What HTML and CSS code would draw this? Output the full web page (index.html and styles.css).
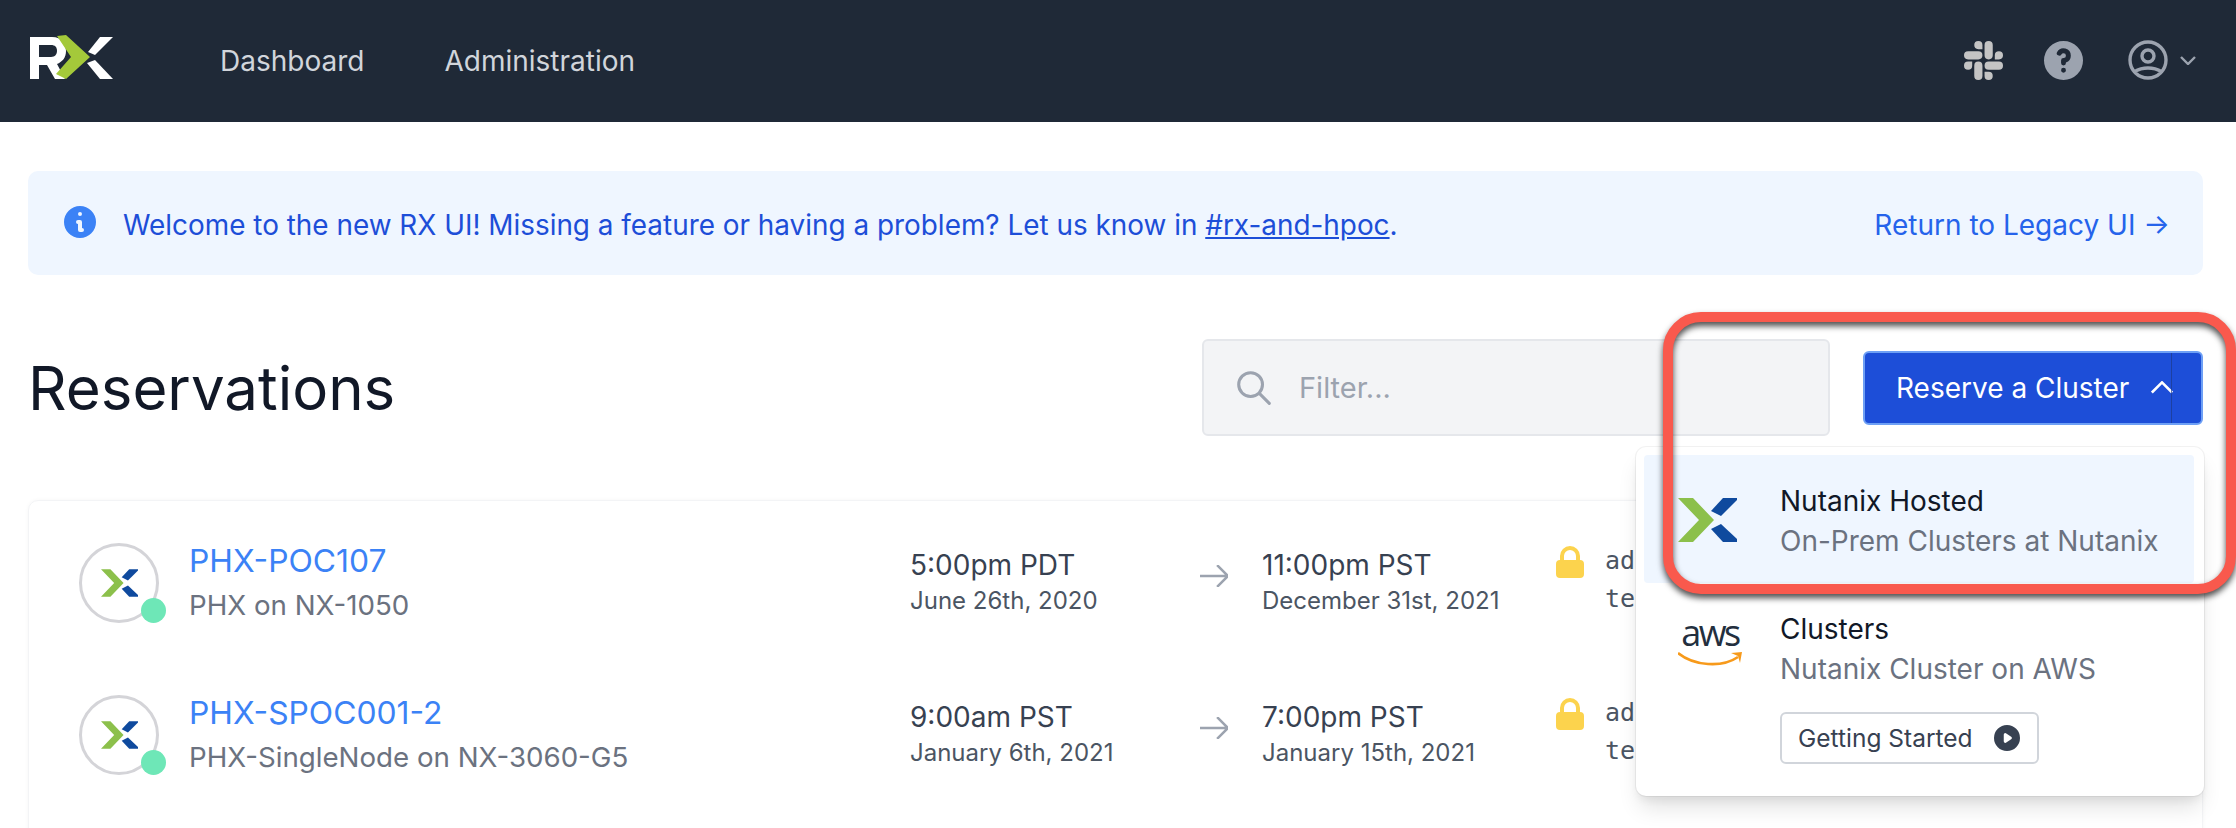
FILE: index.html
```html
<!DOCTYPE html>
<html lang="en">
<head>
<meta charset="utf-8">
<title>Reservations</title>
<link rel="stylesheet" href="styles.css">
</head>
<body>
<svg class="sprite" aria-hidden="true">
  <symbol id="nx" viewBox="0 0 59 44">
    <polygon fill="#8cc04b" points="0,0 15,0 36,22 15,44 0,44 21,22"/>
    <polygon fill="#0f4a9e" points="33,13 45,0 59,0 59,2 43,18"/>
    <polygon fill="#0f4a9e" points="33,31 43,26 59,41 59,44 45,44"/>
  </symbol>
  <symbol id="lock" viewBox="3 2 14 16">
    <path fill="#fcd34d" fill-rule="evenodd" d="M5 9V7a5 5 0 0110 0v2a2 2 0 012 2v5a2 2 0 01-2 2H5a2 2 0 01-2-2v-5a2 2 0 012-2zm8-2v2H7V7a3 3 0 016 0z"/>
  </symbol>
  <symbol id="arrow" viewBox="3 5 18 14">
    <path fill="none" stroke="#9ca3af" stroke-width="1.6" d="M14 5l7 7m0 0l-7 7m7-7H3"/>
  </symbol>
</svg>

<header class="topbar">
  <svg class="logo" viewBox="0 0 83 45" aria-label="RX">
    <path fill="#fff" fill-rule="evenodd" d="M0 2H22C32 2 36 9 36 16C36 23 32 27 27 29L35 44H25L17 30H9V44H0ZM9 10V22H21C25 22 27 19 27 16C27 12 25 10 21 10Z"/>
    <polygon fill="#a4c93a" points="27,1 36,0 60,22 36,44 26,39 41,22"/>
    <polygon fill="#fff" points="58,17 70,2 83,2 65,20"/>
    <polygon fill="#fff" points="57,28 65,25 83,44 70,44"/>
  </svg>
  <nav class="nav">
    <a class="nav-link">Dashboard</a>
    <a class="nav-link">Administration</a>
  </nav>
  <div class="top-icons">
    <svg class="icon-slack" viewBox="0 0 24 24"><path fill="#c4c4c4" d="M5.042 15.165a2.528 2.528 0 0 1-2.52 2.523A2.528 2.528 0 0 1 0 15.165a2.527 2.527 0 0 1 2.522-2.52h2.52v2.52zM6.313 15.165a2.527 2.527 0 0 1 2.521-2.52 2.527 2.527 0 0 1 2.521 2.52v6.313A2.528 2.528 0 0 1 8.834 24a2.528 2.528 0 0 1-2.521-2.522v-6.313zM8.834 5.042a2.528 2.528 0 0 1-2.521-2.52A2.528 2.528 0 0 1 8.834 0a2.528 2.528 0 0 1 2.521 2.522v2.52H8.834zM8.834 6.313a2.528 2.528 0 0 1 2.521 2.521 2.528 2.528 0 0 1-2.521 2.521H2.522A2.528 2.528 0 0 1 0 8.834a2.528 2.528 0 0 1 2.522-2.521h6.312zM18.956 8.834a2.528 2.528 0 0 1 2.522-2.521A2.528 2.528 0 0 1 24 8.834a2.528 2.528 0 0 1-2.522 2.521h-2.522V8.834zM17.688 8.834a2.528 2.528 0 0 1-2.523 2.521 2.527 2.527 0 0 1-2.52-2.521V2.522A2.527 2.527 0 0 1 15.165 0a2.528 2.528 0 0 1 2.523 2.522v6.312zM15.165 18.956a2.528 2.528 0 0 1 2.523 2.522A2.528 2.528 0 0 1 15.165 24a2.527 2.527 0 0 1-2.52-2.522v-2.522h2.52zM15.165 17.688a2.527 2.527 0 0 1-2.52-2.523 2.526 2.526 0 0 1 2.52-2.52h6.313A2.527 2.527 0 0 1 24 15.165a2.528 2.528 0 0 1-2.522 2.523h-6.313z"/></svg>
    <svg class="icon-help" viewBox="2 2 16 16"><path fill="#9ca3af" fill-rule="evenodd" d="M18 10a8 8 0 11-16 0 8 8 0 0116 0zm-8-3a1 1 0 00-.867.5 1 1 0 11-1.731-1A3 3 0 0113 8a3.001 3.001 0 01-2 2.83V11a1 1 0 11-2 0v-1a1 1 0 011-1 1 1 0 100-2zm0 8a1 1 0 100-2 1 1 0 000 2z"/></svg>
    <div class="user-menu">
      <svg class="icon-user" viewBox="2 2 20 20"><path fill="none" stroke="#9ca3af" stroke-width="1.7" stroke-linecap="round" stroke-linejoin="round" d="M5.121 17.804A13.937 13.937 0 0112 16c2.5 0 4.847.655 6.879 1.804M15 10a3 3 0 11-6 0 3 3 0 016 0zm6 2a9 9 0 11-18 0 9 9 0 0118 0z"/></svg>
      <svg class="icon-chev" viewBox="4 8 16 9"><path fill="none" stroke="#9ca3af" stroke-width="2.4" d="M19 9l-7 7-7-7"/></svg>
    </div>
  </div>
</header>

<main class="page">
  <section class="banner">
    <svg class="icon-info" viewBox="2 2 16 16"><path fill="#3b82f6" fill-rule="evenodd" d="M18 10a8 8 0 11-16 0 8 8 0 0116 0zm-7-4a1 1 0 11-2 0 1 1 0 012 0zM9 9a1 1 0 000 2v3a1 1 0 001 1h1a1 1 0 100-2v-3a1 1 0 00-1-1H9z"/></svg>
    <p class="banner-text">Welcome to the new RX UI! Missing a feature or having a problem? Let us know in <a class="banner-link">#rx-and-hpoc</a>.</p>
    <a class="banner-return">Return to Legacy UI →</a>
  </section>

  <section class="title-row">
    <h1 class="title">Reservations</h1>
    <div class="filter">
      <svg class="icon-search" viewBox="2 2 20 20"><path fill="none" stroke="#9ca3af" stroke-width="1.8" stroke-linecap="round" d="M21 21l-6-6m2-5a7 7 0 11-14 0 7 7 0 0114 0z"/></svg>
      <span class="filter-text">Filter...</span>
    </div>
    <div class="reserve">
      <button class="reserve-btn">
        <span class="reserve-label">Reserve a Cluster</span>
        <svg class="icon-up" viewBox="4.5 7 15 9"><path fill="none" stroke="#fff" stroke-width="1.8" d="M5 15l7-7 7 7"/></svg>
        <span class="reserve-split"></span>
      </button>
      <div class="dropdown">
        <div class="drop-item drop-active">
          <svg class="drop-logo"><use href="#nx"/></svg>
          <div class="drop-body">
            <div class="drop-title">Nutanix Hosted</div>
            <div class="drop-sub">On-Prem Clusters at Nutanix</div>
          </div>
        </div>
        <div class="drop-item drop-aws">
          <div class="aws-logo">
            <span class="aws-word">aws</span>
            <svg class="aws-smile" viewBox="0 0 64 15"><path fill="none" stroke="#f79a1b" stroke-width="2.6" d="M0 1C16 14 44 16 60 5"/><path fill="#f79a1b" d="M53 1L64 0L62 11L60 4Z"/></svg>
          </div>
          <div class="drop-body">
            <div class="drop-title">Clusters</div>
            <div class="drop-sub">Nutanix Cluster on AWS</div>
            <button class="started">
              <span>Getting Started</span>
              <svg class="icon-play" viewBox="2 2 16 16"><path fill="#374151" fill-rule="evenodd" d="M10 18a8 8 0 100-16 8 8 0 000 16zM9.555 7.168A1 1 0 008 8v4a1 1 0 001.555.832l3-2a1 1 0 000-1.664l-3-2z"/></svg>
            </button>
          </div>
        </div>
      </div>
    </div>
  </section>

  <section class="card">
    <article class="row">
      <div class="avatar"><svg class="avatar-logo"><use href="#nx"/></svg><span class="status"></span></div>
      <div class="cell">
        <a class="res-name">PHX-POC107</a>
        <div class="res-sub">PHX on NX-1050</div>
      </div>
      <div class="cell">
        <div class="time">5:00pm PDT</div>
        <div class="date">June 26th, 2020</div>
      </div>
      <svg class="row-arrow"><use href="#arrow"/></svg>
      <div class="cell">
        <div class="time">11:00pm PST</div>
        <div class="date">December 31st, 2021</div>
      </div>
      <svg class="row-lock"><use href="#lock"/></svg>
      <div class="cred">
        <div>ad</div>
        <div>te</div>
      </div>
    </article>
    <article class="row">
      <div class="avatar"><svg class="avatar-logo"><use href="#nx"/></svg><span class="status"></span></div>
      <div class="cell">
        <a class="res-name">PHX-SPOC001-2</a>
        <div class="res-sub">PHX-SingleNode on NX-3060-G5</div>
      </div>
      <div class="cell">
        <div class="time">9:00am PST</div>
        <div class="date">January 6th, 2021</div>
      </div>
      <svg class="row-arrow"><use href="#arrow"/></svg>
      <div class="cell">
        <div class="time">7:00pm PST</div>
        <div class="date">January 15th, 2021</div>
      </div>
      <svg class="row-lock"><use href="#lock"/></svg>
      <div class="cred">
        <div>ad</div>
        <div>te</div>
      </div>
    </article>
  </section>
</main>

<div class="callout"></div>
</body>
</html>
```

FILE: styles.css
```css
* { box-sizing: border-box; }
html, body { margin: 0; padding: 0; }
body {
  width: 2236px;
  height: 828px;
  overflow: hidden;
  position: relative;
  background: #fff;
  font-family: Inter, "Liberation Sans", sans-serif;
  color: #111827;
}
.sprite { display: none; }

/* top bar */
.topbar {
  height: 122px;
  background: #1f2937;
  display: flex;
  align-items: center;
  padding: 0 40px 2px 30px;
}
.logo { width: 83px; height: 45px; margin-right: 107px; flex: none; margin-top: -6px; }
.nav { display: flex; gap: 80px; padding-top: 1px; }
.nav-link { font-size: 28px; color: #d1d5db; line-height: 40px; }
.top-icons { margin-left: auto; display: flex; align-items: center; }
.icon-slack { width: 39px; height: 39px; margin-right: 41px; }
.icon-help { width: 39px; height: 39px; margin-right: 45px; }
.user-menu { display: flex; align-items: center; gap: 12px; }
.icon-user { width: 40px; height: 40px; }
.icon-chev { width: 16px; height: 9px; }

/* page */
.page { padding: 49px 33px 0 28px; }
.banner {
  height: 104px;
  background: #eff6ff;
  border-radius: 10px;
  display: flex;
  align-items: center;
  padding: 3px 33px 0 36px;
}
.icon-info { width: 32px; height: 32px; margin-right: 27px; flex: none; margin-top: -6px; }
.banner-text { margin: 0; font-size: 27.9px; color: #1d4ed8; line-height: 40px; }
.banner-link { text-decoration: underline; }
.banner-return { margin-left: auto; font-size: 28px; color: #2563eb; line-height: 40px; }

.title-row { display: flex; align-items: center; margin-top: 64px; height: 97px; }
.title { margin: 0 auto 0 0; padding-top: 2px; font-size: 60px; font-weight: 400; line-height: 95px; color: #111827; }
.filter {
  width: 628px;
  height: 97px;
  background: #f3f4f6;
  border: 2px solid #e5e7eb;
  border-radius: 6px;
  display: flex;
  align-items: center;
  padding-left: 33px;
}
.icon-search { width: 34px; height: 34px; margin-right: 28px; }
.filter-text { font-size: 29px; color: #9ca3af; }

.reserve { position: relative; margin-left: 33px; }
.reserve-btn {
  width: 340px;
  height: 74px;
  background: #1d4ed8;
  border: 2px solid #6ea0f5;
  border-radius: 6px;
  color: #fff;
  font: inherit;
  font-size: 28px;
  display: flex;
  align-items: center;
  padding: 0 0 0 31px;
  position: relative;
}
.icon-up { width: 22px; height: 13px; margin-left: 22px; }
.reserve-split { position: absolute; left: 306px; top: 0; bottom: 0; width: 1px; background: #1e3a8a; opacity: .7; }

.dropdown {
  position: absolute;
  top: 96px;
  right: -1px;
  width: 568px;
  height: 349px;
  background: #fff;
  border-radius: 10px;
  padding: 8px 10px 8px 8px;
  box-shadow: 0 0 0 1px rgba(0,0,0,.05), 0 15px 22px -4px rgba(0,0,0,.12), 0 6px 8px -2px rgba(0,0,0,.06);
  z-index: 2;
}
.drop-item { display: flex; padding-left: 34px; }
.drop-active { background: #eff6ff; height: 128px; padding-top: 26px; border-radius: 4px; }
.drop-aws { padding-top: 26px; }
.drop-logo { width: 59px; height: 44px; margin-right: 43px; margin-top: 17px; flex: none; }
.drop-title { font-size: 28px; line-height: 40px; color: #111827; }
.drop-sub { font-size: 28px; line-height: 41px; color: #6b7280; }
.aws-logo { width: 64px; margin-right: 38px; margin-top: 9px; flex: none; display: flex; flex-direction: column; }
.aws-word { font-family: "Open Sans", sans-serif; font-size: 36px; font-weight: 400; line-height: 30px; color: #232f3e; letter-spacing: -2.5px; text-align: center; }
.aws-smile { width: 64px; height: 15px; margin-top: 4px; }
.started {
  margin-top: 22px;
  width: 259px;
  height: 52px;
  background: #fff;
  border: 2px solid #d1d5db;
  border-radius: 6px;
  font: inherit;
  font-size: 24.5px;
  color: #374151;
  display: flex;
  align-items: center;
  padding: 0 0 0 16px;
}
.icon-play { width: 26px; height: 26px; margin-left: 21px; }

/* list */
.card {
  margin-top: 64px;
  height: 340px;
  padding: 6px 0 0 50px;
  border: 1px solid #f3f4f6;
  border-radius: 10px;
  box-shadow: 0 0 4px rgba(0,0,0,.04);
}
.row {
  height: 152px;
  display: grid;
  grid-template-columns: 110px 721px 290px 62px 294px 49px 1fr;
  align-items: center;
}
.avatar {
  width: 80px;
  height: 80px;
  border: 3px solid #d4d4d8;
  border-radius: 50%;
  position: relative;
  display: flex;
  align-items: center;
  justify-content: center;
}
.avatar-logo { width: 37px; height: 28px; }
.status {
  position: absolute;
  right: -10px;
  bottom: -3px;
  width: 25px;
  height: 25px;
  border-radius: 50%;
  background: #6ee7b7;
}
.res-name { display: block; font-size: 31.8px; line-height: 45px; color: #3b82f6; }
.res-sub { font-size: 27.7px; line-height: 45px; color: #6b7280; }
.time { font-size: 28px; line-height: 36px; color: #374151; }
.date { font-size: 24px; line-height: 36px; color: #4b5563; }
.row-arrow { width: 28px; height: 22px; margin-top: -14px; }
.row-lock { width: 28px; height: 32px; margin-top: -42px; }
.cred { font-family: "DejaVu Sans Mono", monospace; font-size: 25px; line-height: 38px; color: #4b5563; margin-top: -6px; white-space: nowrap; }

/* annotation drawn over the screenshot */
.callout {
  position: absolute;
  left: 1663px;
  top: 312px;
  width: 573px;
  height: 282px;
  border: 10px solid #f9594d;
  border-radius: 38px;
  filter: drop-shadow(0 4px 3px rgba(0,0,0,.7));
  z-index: 5;
}
```
